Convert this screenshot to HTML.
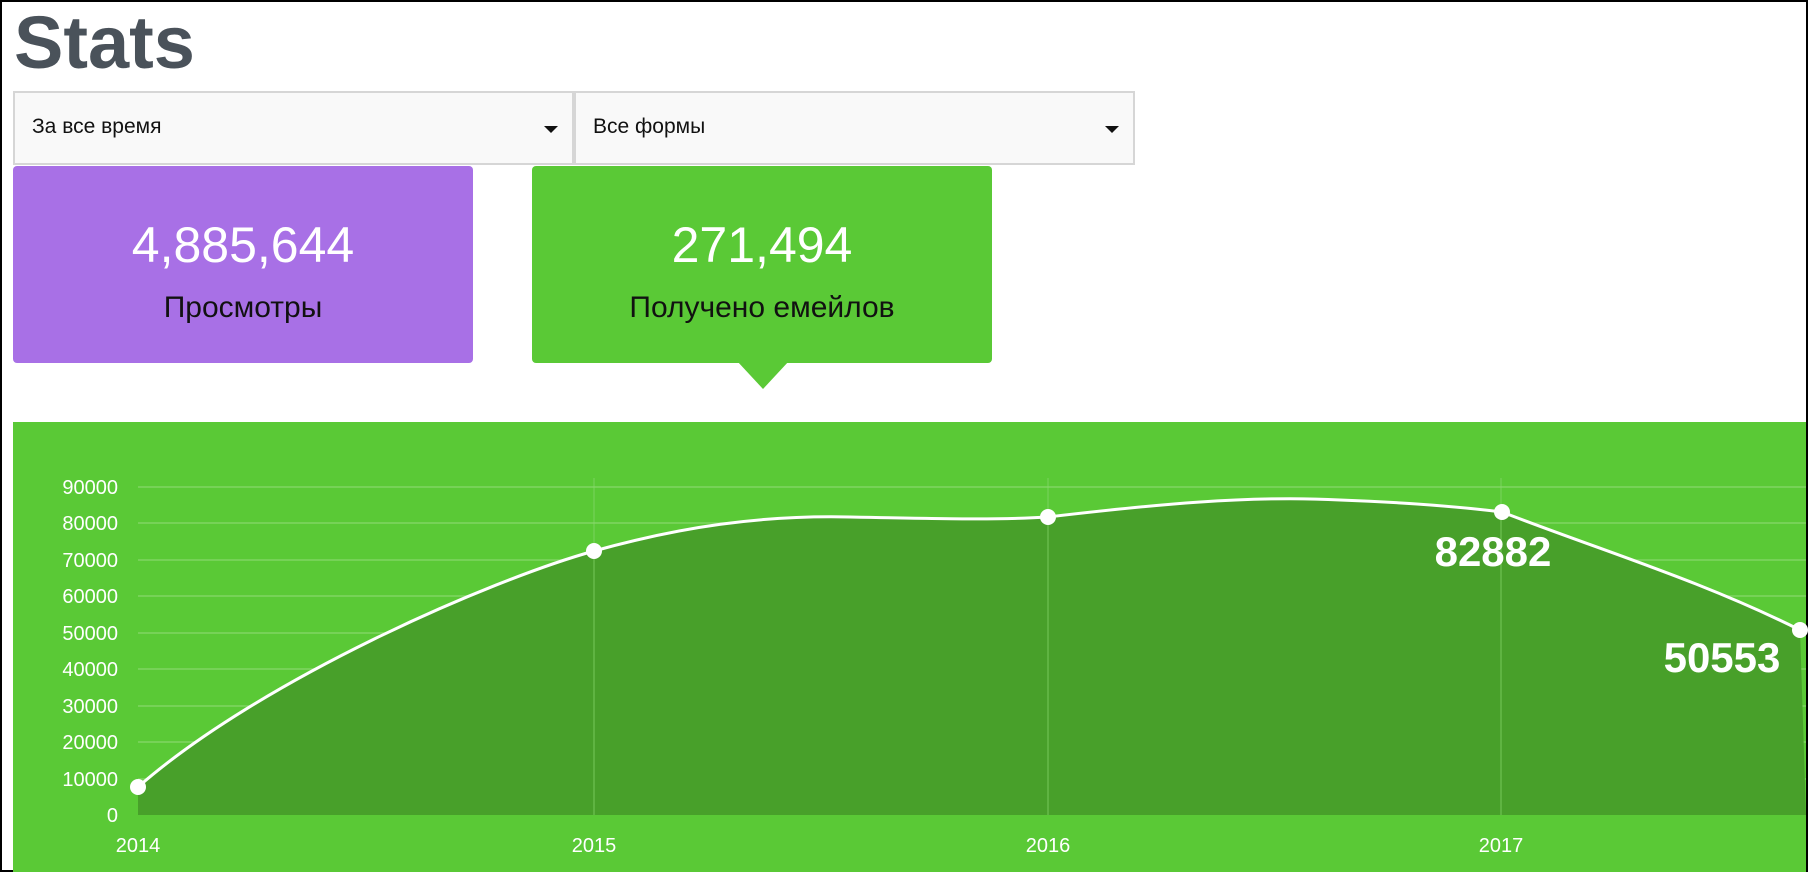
<!DOCTYPE html>
<html><head><meta charset="utf-8"><style>
*{margin:0;padding:0;box-sizing:border-box}
html,body{width:1808px;height:872px;overflow:hidden;background:#fff}
body{position:relative;font-family:"Liberation Sans","DejaVu Sans",sans-serif;border:2px solid #000}
.t{position:absolute;left:12px;top:-2px;font-size:74px;font-weight:bold;color:#4a525a;letter-spacing:0px}
.dd{position:absolute;top:89px;height:74px;background:#f9f9f9;border:2px solid #d6d6d6;font-size:21px;color:#111;padding:22px 0 0 17px}
.dd:after{content:"";position:absolute;right:14px;top:33px;border-left:7px solid transparent;border-right:7px solid transparent;border-top:7px solid #111}
.card{position:absolute;top:164px;height:197px;width:460px;border-radius:4px;text-align:center}
.num{position:absolute;left:0;right:0;top:50px;font-size:50px;color:#fff}
.lab{position:absolute;left:0;right:0;top:125px;font-size:30px;color:#111}
</style></head><body>
<div class="t">Stats</div>
<div class="dd" style="left:11px;width:561px">За все время</div>
<div class="dd" style="left:572px;width:561px">Все формы</div>
<div class="card" style="left:11px;background:#a870e6"><div class="num">4,885,644</div><div class="lab">Просмотры</div></div>
<div class="card" style="left:530px;background:#5ac936"><div class="num">271,494</div><div class="lab">Получено емейлов</div></div>
<div style="position:absolute;left:735px;top:359px;border-left:26px solid transparent;border-right:26px solid transparent;border-top:28px solid #5ac936"></div>
<svg style="position:absolute;left:-2px;top:-2px" width="1808" height="872">
<rect x="13" y="422" width="1793" height="450" fill="#5ac936"/>
<g stroke="#8ad86e" stroke-width="1.5" opacity="0.8">
<line x1="138" y1="487" x2="1806" y2="487"/><line x1="138" y1="523" x2="1806" y2="523"/><line x1="138" y1="560" x2="1806" y2="560"/><line x1="138" y1="596" x2="1806" y2="596"/><line x1="138" y1="633" x2="1806" y2="633"/><line x1="138" y1="669" x2="1806" y2="669"/><line x1="138" y1="706" x2="1806" y2="706"/><line x1="138" y1="742" x2="1806" y2="742"/><line x1="138" y1="779" x2="1806" y2="779"/>
</g>
<path d="M138,787 C260,680 490,580 594,551 C680,527 760,515 850,517 C950,519 1000,520 1048,517 C1150,505 1250,495 1340,500 C1420,503 1470,508 1502,512 C1600,550 1700,580 1800,630 L1806,815 L138,815 Z" fill="#48a02a"/>
<g stroke="#8ad86e" stroke-width="1" opacity="0.7">
<line x1="594" y1="478" x2="594" y2="815"/><line x1="1048" y1="478" x2="1048" y2="815"/><line x1="1501" y1="478" x2="1501" y2="815"/>
</g>
<path d="M138,787 C260,680 490,580 594,551 C680,527 760,515 850,517 C950,519 1000,520 1048,517 C1150,505 1250,495 1340,500 C1420,503 1470,508 1502,512 C1600,550 1700,580 1800,630" fill="none" stroke="#fff" stroke-width="3"/>
<g fill="#fff"><circle cx="138" cy="787" r="8"/><circle cx="594" cy="551" r="8"/><circle cx="1048" cy="517" r="8"/><circle cx="1502" cy="512" r="8"/><circle cx="1800" cy="630" r="8"/></g>
<g fill="#fff" font-family="Liberation Sans,sans-serif" font-size="20" text-anchor="end">
<text x="118" y="494">90000</text><text x="118" y="530">80000</text><text x="118" y="567">70000</text><text x="118" y="603">60000</text><text x="118" y="640">50000</text><text x="118" y="676">40000</text><text x="118" y="713">30000</text><text x="118" y="749">20000</text><text x="118" y="786">10000</text><text x="118" y="822">0</text>
</g>
<g fill="#fff" font-family="Liberation Sans,sans-serif" font-size="20" text-anchor="middle">
<text x="138" y="852">2014</text><text x="594" y="852">2015</text><text x="1048" y="852">2016</text><text x="1501" y="852">2017</text>
</g>
<g fill="#fff" font-family="Liberation Sans,sans-serif" font-weight="bold" font-size="42" text-anchor="middle">
<text x="1493" y="566">82882</text><text x="1722" y="672">50553</text>
</g>
</svg>
</body></html>
